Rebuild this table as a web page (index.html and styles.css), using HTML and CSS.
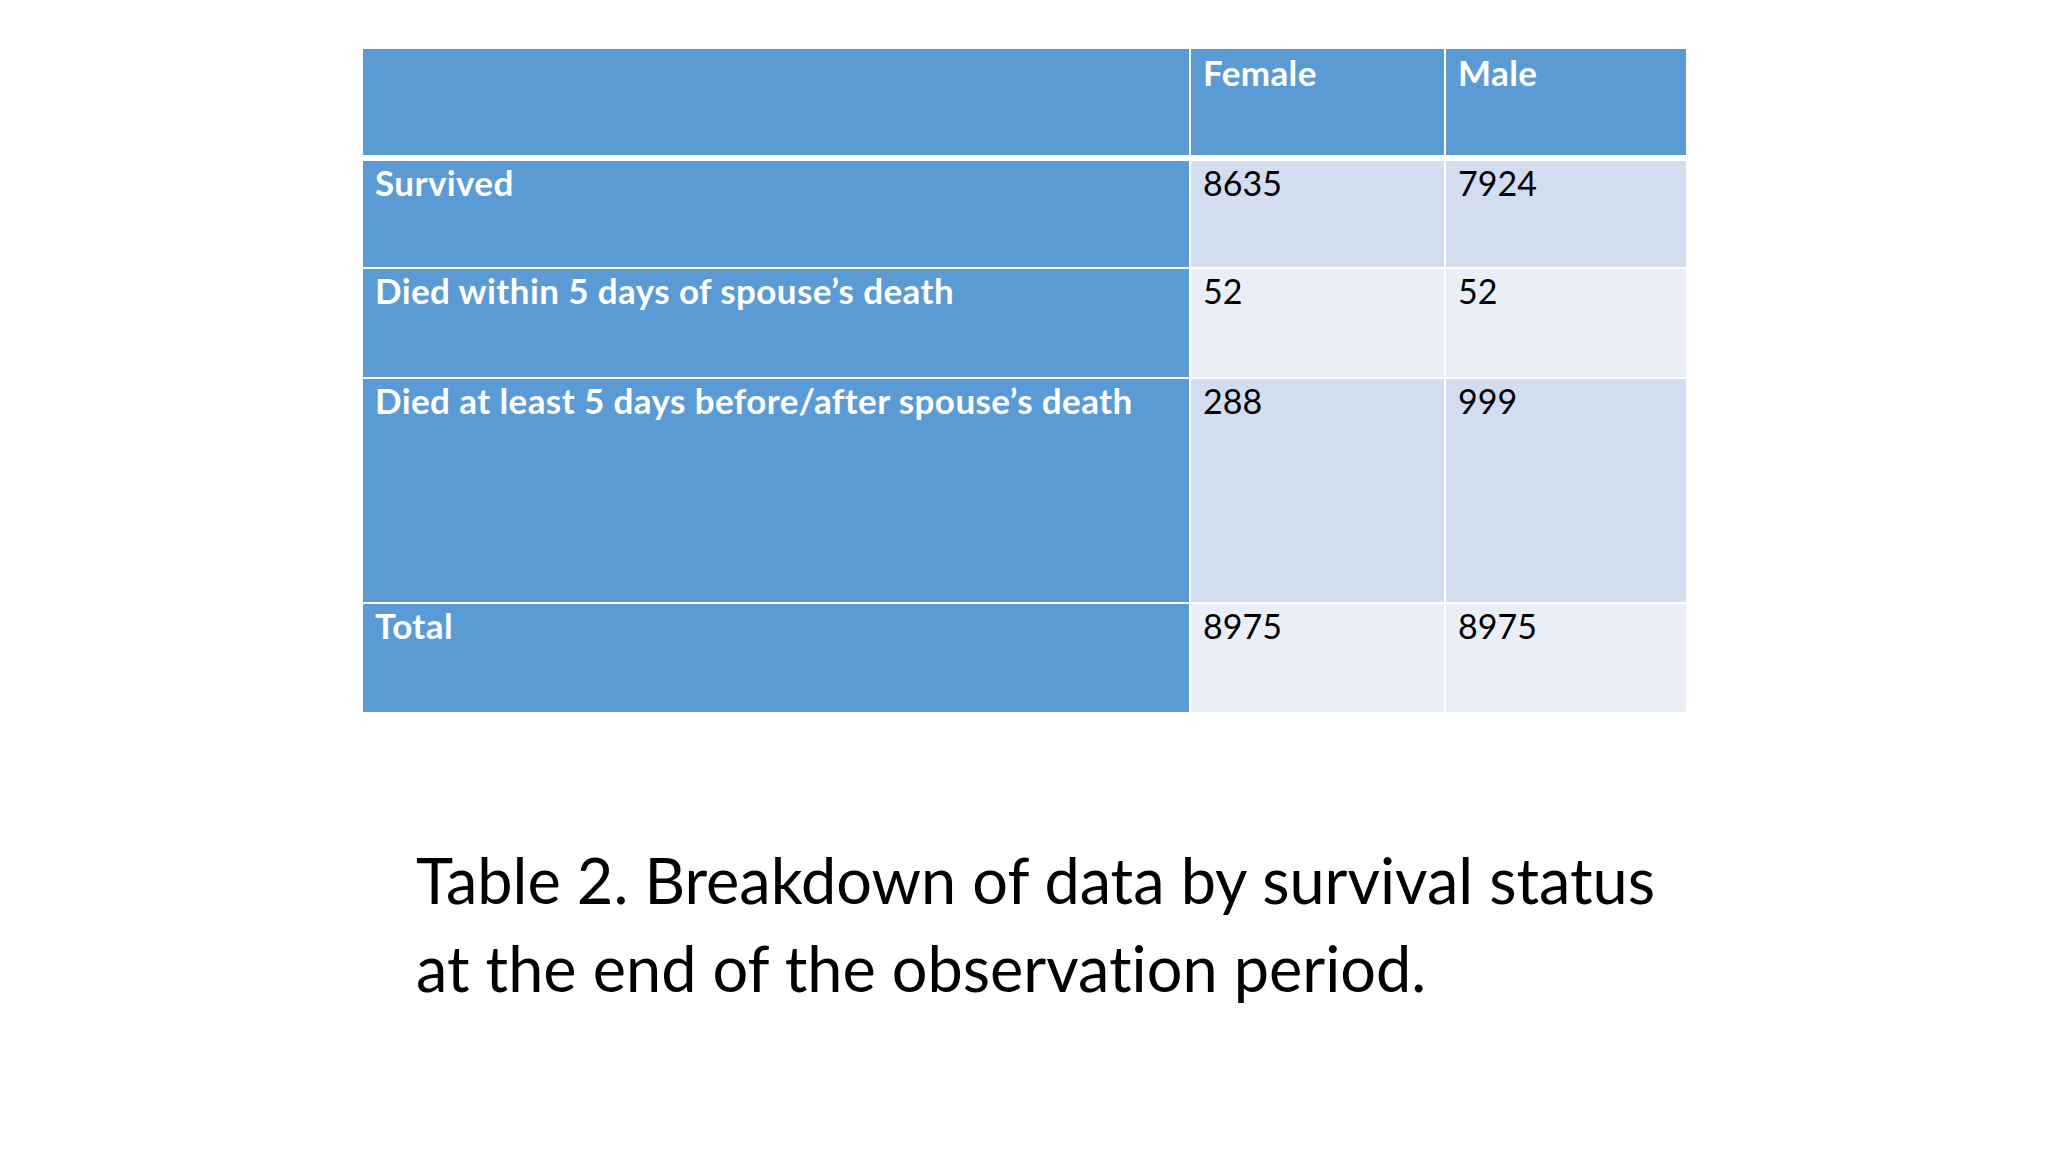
FILE: index.html
```html
<!DOCTYPE html>
<html lang="en">
<head>
<meta charset="utf-8">
<title>Table 2</title>
<link rel="stylesheet" href="styles.css">
</head>
<body>
<main class="slide">
  <table class="data">
    <colgroup>
      <col class="c-label">
      <col class="c-female">
      <col class="c-male">
    </colgroup>
    <thead>
      <tr class="r-head">
        <th class="cell label"></th>
        <th class="cell">Female</th>
        <th class="cell last">Male</th>
      </tr>
    </thead>
    <tbody>
      <tr class="r-body odd r1">
        <th class="cell label">Survived</th>
        <td class="cell">8635</td>
        <td class="cell last">7924</td>
      </tr>
      <tr class="r-body even r2">
        <th class="cell label">Died within 5 days of spouse’s death</th>
        <td class="cell">52</td>
        <td class="cell last">52</td>
      </tr>
      <tr class="r-body odd r3">
        <th class="cell label">Died at least 5 days before/after spouse’s death</th>
        <td class="cell">288</td>
        <td class="cell last">999</td>
      </tr>
      <tr class="r-body even r4">
        <th class="cell label">Total</th>
        <td class="cell">8975</td>
        <td class="cell last">8975</td>
      </tr>
    </tbody>
  </table>
  <p class="caption">Table 2. Breakdown of data by survival status<br>at the end of the observation period.</p>
</main>
</body>
</html>
```

FILE: styles.css
```css
html, body {
  margin: 0;
  padding: 0;
  background: #ffffff;
}

.slide {
  width: 2048px;
  height: 1152px;
  box-sizing: border-box;
  padding: 49px 0 0 363px;
  font-family: Lato, "Open Sans", "Liberation Sans", sans-serif;
  font-variant-ligatures: none;
  font-feature-settings: "liga" 0, "clig" 0;
  overflow: hidden;
}

.data {
  border-collapse: separate;
  border-spacing: 0;
  table-layout: fixed;
  width: 1323px;
}

.c-label { width: 828px; }
.c-female { width: 255px; }
.c-male { width: 240px; }

.cell {
  padding: 2px 10px 0 12px;
  vertical-align: top;
  text-align: left;
  font-size: 34px;
  line-height: 1.2;
  color: #000000;
  border-right: 2px solid #ffffff;
  white-space: nowrap;
  font-weight: 400;
}

.cell.last { border-right: 0; }

.r-head { height: 112px; }
.r1 { height: 108px; }
.r2 { height: 110px; }
.r3 { height: 225px; }
.r4 { height: 108px; }

.r-head .cell {
  background: #5b9bd5;
  color: #ffffff;
  font-weight: 700;
  font-size: 35px;
  letter-spacing: 0.4px;
  padding-top: 2px;
  border-bottom: 6px solid #ffffff;
}

.r-body .cell { border-bottom: 2px solid #ffffff; }
.r-body.r4 .cell { border-bottom: 0; }

.r-body.odd .cell { background: #d2deef; }
.r-body.even .cell { background: #eaeff7; }

.r-body .cell.label {
  background: #5b9bd5;
  color: #ffffff;
  font-weight: 700;
  font-size: 35px;
  letter-spacing: 0.4px;
  padding-top: 0;
}

.caption {
  margin: 124px 0 0 53px;
  font-size: 63px;
  line-height: 88px;
  color: #000000;
  font-weight: 400;
}
```
